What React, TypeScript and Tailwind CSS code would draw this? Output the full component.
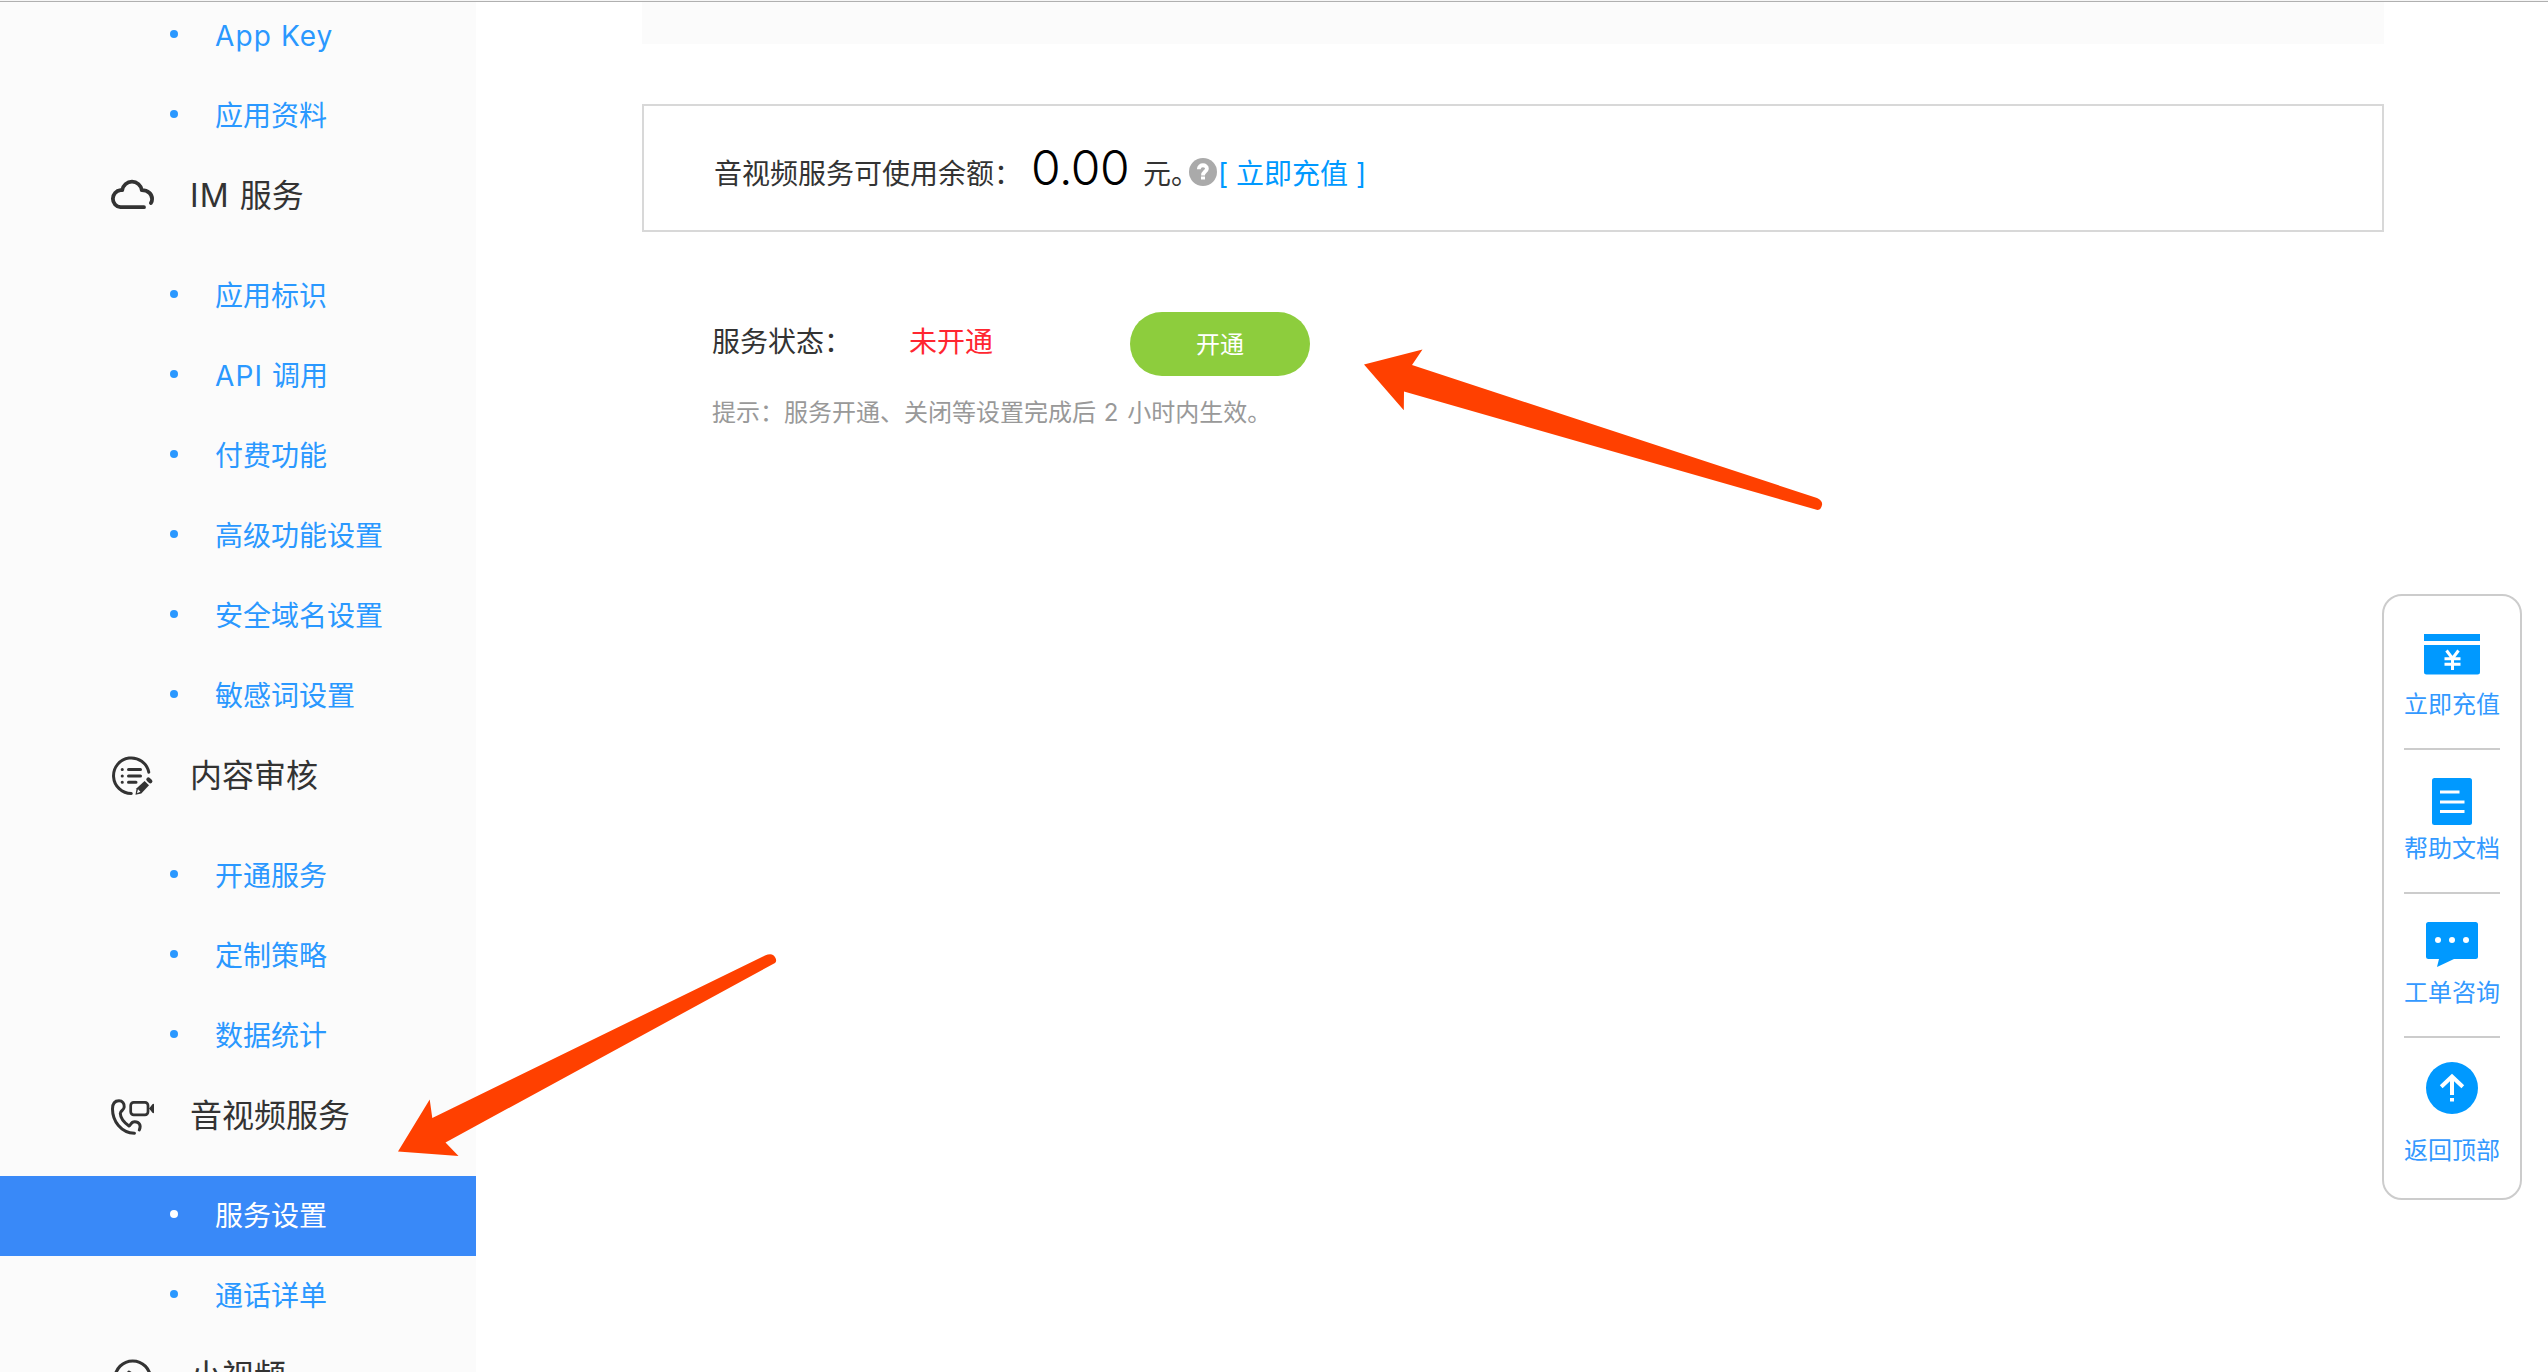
import React from "react";

const Cloud = () => (
  <svg className="h-12 w-12" viewBox="0 0 48 48" fill="none" stroke="#333" strokeWidth="3.8" strokeLinecap="round" strokeLinejoin="round">
    <path d="M36 35.200H12.500A8.550 8.550 0 0 1 12.500 18.200H14.200A9.900 9.900 0 0 1 33.800 18.200C40 18.200 44.100 22 44.100 27Q44.100 29.500 42.900 31" />
  </svg>
);

const Review = () => (
  <svg className="h-12 w-12" viewBox="0 0 48 48" fill="none" stroke="#333" strokeWidth="3" strokeLinecap="round">
    <path d="M23.300 41.500A17.800 17.800 0 1 1 40.800 20.200" />
    <path d="M20.500 17.500H32.500M20.500 24H32.500M20.500 30.300H28M14.200 17.500h.1M14.200 24h.1M14.200 30.300h.1" />
    <path d="M27.500 42.800L28.600 36.200L36.600 29L41 33.200L33.300 41.400Z" fill="#333" stroke="none" />
    <path d="M29 41.200L30 37.200L32.400 39.800Z" fill="#fbfbfb" stroke="none" />
    <path d="M40.400 27.400L42.300 29.200" strokeWidth="4.2" />
  </svg>
);

const PhoneVideo = () => (
  <svg className="h-12 w-12" viewBox="0 0 48 48" fill="none" stroke="#333" strokeWidth="3" strokeLinecap="round" strokeLinejoin="round">
    <path d="M26.500 41.200C13 41 4.500 29 4.500 17C4.500 11 7 8.800 11 8.800C14.500 8.800 16.500 11.500 16.200 15C16 18.500 12.300 18.500 12.300 21.500C12.500 26.500 17.500 31.500 21 34C22.800 33.500 22.500 29.800 26.800 29.800C31 29.800 33.500 33 31.300 38" />
    <rect x="22.700" y="10.400" width="17.300" height="12.400" rx="3" strokeWidth="2.700" />
    <path d="M41 16.500L46 11.500V21.500Z" fill="#333" stroke="none" />
    <path d="M42.500 16.500L45 13V20Z" strokeWidth="2" />
  </svg>
);

const ShortVideo = () => (
  <svg className="h-12 w-12" viewBox="0 0 48 48" fill="none" stroke="#333" strokeWidth="3.2">
    <circle cx="24.700" cy="26.800" r="17.800" />
    <path d="M20.800 20L31.500 26.800L20.800 33.600Z" fill="#333" strokeWidth="3" strokeLinejoin="round" />
  </svg>
);

// Latin runs are set slightly wider than the Chinese text around them.
function Label({ text }: { text: string }) {
  const m = text.match(/^([A-Za-z ]+)(.*)$/);
  if (!m) return <>{text}</>;
  return (
    <>
      <span className="tracking-[1.1px] whitespace-pre">{m[1]}</span>
      {m[2]}
    </>
  );
}

function Item({ label, active }: { label: string; active?: boolean }) {
  return (
    <a className={active ? "flex h-20 shrink-0 items-center bg-[#3989f8] pl-[170px] text-[28px] text-white" : "flex h-20 shrink-0 items-center pl-[170px] text-[28px] text-[#2a98ff]"}>
      <span className="mr-[37px] mb-1 size-2 rounded-full bg-current" />
      <span><Label text={label} /></span>
    </a>
  );
}

function Heading({ label, icon }: { label: string; icon: React.ReactNode }) {
  return (
    <h2 className="mb-5 flex h-20 shrink-0 items-center pl-[108px] text-[32px] text-[#333]">
      {icon}
      <span className="ml-[34px]"><Label text={label} /></span>
    </h2>
  );
}

const sections = [
  { title: "IM 服务", icon: <Cloud />, items: ["应用标识", "API 调用", "付费功能", "高级功能设置", "安全域名设置", "敏感词设置"] },
  { title: "内容审核", icon: <Review />, items: ["开通服务", "定制策略", "数据统计"] },
  { title: "音视频服务", icon: <PhoneVideo />, items: ["服务设置", "通话详单"] },
  { title: "小视频", icon: <ShortVideo />, items: [] },
];

const Card = () => (
  <svg className="h-[41px] w-14" viewBox="0 0 56 41">
    <path d="M0 0H56V7H0ZM0 11H56V38Q56 40.500 53.500 40.500H2.500Q0 40.500 0 38Z" fill="#09f" />
    <path d="M22.500 16.500L28.500 24.500L34.500 16.500M28.500 24V36M20.500 24.700H36.500M20.500 30.200H36.500" fill="none" stroke="#fff" strokeWidth="3" />
  </svg>
);
const Doc = () => (
  <svg className="h-[47px] w-10" viewBox="0 0 40 47">
    <rect width="40" height="47" rx="2.500" fill="#09f" />
    <path d="M8 14H27.500M8 24H32.500M8 33.500H32.500" stroke="#fff" strokeWidth="3" />
  </svg>
);
const Chat = () => (
  <svg className="h-[45px] w-[52px]" viewBox="0 0 52 45">
    <path d="M2.500 0H49.500Q52 0 52 2.500V34.500Q52 37 49.500 37H28L11 45L13 37H2.500Q0 37 0 34.500V2.500Q0 0 2.500 0Z" fill="#09f" />
    <circle cx="12" cy="18" r="3" fill="#fff" />
    <circle cx="26" cy="18" r="3" fill="#fff" />
    <circle cx="40" cy="18" r="3" fill="#fff" />
  </svg>
);
const Up = () => (
  <svg className="size-[52px]" viewBox="0 0 52 52">
    <circle cx="26" cy="26" r="26" fill="#09f" />
    <path d="M15.200 24.800L26 14.500L36.800 24.800M26 15V33M26 36V39.500" fill="none" stroke="#fff" strokeWidth="4" />
  </svg>
);

function Tool({ icon, label, last }: { icon: React.ReactNode; label: string; last?: boolean }) {
  return (
    <a className={last ? "flex w-24 flex-col items-center pt-6" : "flex h-36 w-24 flex-col items-center border-b-2 border-[#ccc] pt-7"}>
      <span className={last ? "flex h-[70px] items-start" : "flex h-[52px] items-start"}>{icon}</span>
      <span className="text-2xl leading-[38px] whitespace-nowrap text-[#3399ff]">{label}</span>
    </a>
  );
}

export default function App() {
  return (
    <div className="relative flex h-[1372px] w-[2548px] flex-col overflow-hidden bg-white font-['Inter','Noto_Sans_CJK_SC',sans-serif]">
      <div className="h-0.5 shrink-0 border-b border-[#b0b0b0] bg-[#f6f6f6]" />
      <div className="flex min-h-0 flex-1">
        <nav className="flex w-[476px] shrink-0 flex-col overflow-hidden bg-[#fbfbfb]">
          <div className="-mt-1.5 flex flex-col">
            <Item label="App Key" />
            <Item label="应用资料" />
            {sections.map((s) => (
              <React.Fragment key={s.title}>
                <Heading label={s.title} icon={s.icon} />
                {s.items.map((i) => (
                  <Item key={i} label={i} active={i === "服务设置"} />
                ))}
              </React.Fragment>
            ))}
          </div>
        </nav>
        <main className="ml-[166px] w-[1742px] shrink-0">
          <div className="h-[42px] bg-[#fbfbfb]" />
          <section className="mt-[60px] flex h-32 items-center border-2 border-[#d8d8d8] pl-[70px] text-[28px] text-[#333]">
            <span className="mt-3 w-[317px] whitespace-nowrap">音视频服务可使用余额：</span>
            <span className="w-[112px] text-5xl font-light tracking-[-0.5px] text-black">0.00</span>
            <span className="mt-3 w-[46px] whitespace-nowrap">元。</span>
            <svg className="mt-2 mr-px size-7" viewBox="0 0 28 28">
              <circle cx="14" cy="14" r="14" fill="#aaa" />
              <path d="M9.800 11.200C9.800 5.800 18.200 6.200 17.900 10.800C17.600 13.800 14 13.500 14 17.500" fill="none" stroke="#fff" strokeWidth="3.800" />
              <path d="M12 18.500H16V21.500H12Z" fill="#fff" />
            </svg>
            <a className="mt-3 whitespace-pre text-[#09f]">[ 立即充值 ]</a>
          </section>
          <section className="pt-20 pl-[70px]">
            <div className="flex h-16 items-center text-[28px] text-[#333]">
              <span className="mb-1 w-[197px]">服务状态：</span>
              <span className="mb-1 w-[221px] text-[#ff2630]">未开通</span>
              <button className="h-16 w-[180px] rounded-full bg-[#8dcd3d] pt-0.5 text-2xl text-white">开通</button>
            </div>
            <p className="mt-[19px] text-2xl leading-9 text-[#999]">
              提示：服务开通、关闭等设置完成后<span className="tracking-[1px]"> 2 </span>小时内生效。
            </p>
          </section>
        </main>
      </div>

      <aside className="absolute top-[594px] left-[2382px] flex h-[606px] w-[140px] flex-col items-center rounded-[20px] border-2 border-[#ccc] bg-white pt-2.5">
        <Tool icon={<Card />} label="立即充值" />
        <Tool icon={<Doc />} label="帮助文档" />
        <Tool icon={<Chat />} label="工单咨询" />
        <Tool icon={<Up />} label="返回顶部" last />
      </aside>

      <svg className="pointer-events-none absolute top-[340px] left-[1350px] h-[180px] w-[490px]" viewBox="0 0 490 180">
        <path d="M14 24.500L72.500 9.500L62 25L467 158Q473 161 472 165Q471 170 467.500 170L54 51.500L53.800 70.300Z" fill="#ff4000" />
      </svg>
      <svg className="pointer-events-none absolute top-[930px] left-[380px] h-[240px] w-[420px]" viewBox="0 0 420 240">
        <path d="M18 221.500L49.700 169.500L52.300 188L385 25.500Q393 22 395.500 28Q397 31 395 33L65.500 212.500L78.500 226Z" fill="#ff4000" />
      </svg>
    </div>
  );
}
